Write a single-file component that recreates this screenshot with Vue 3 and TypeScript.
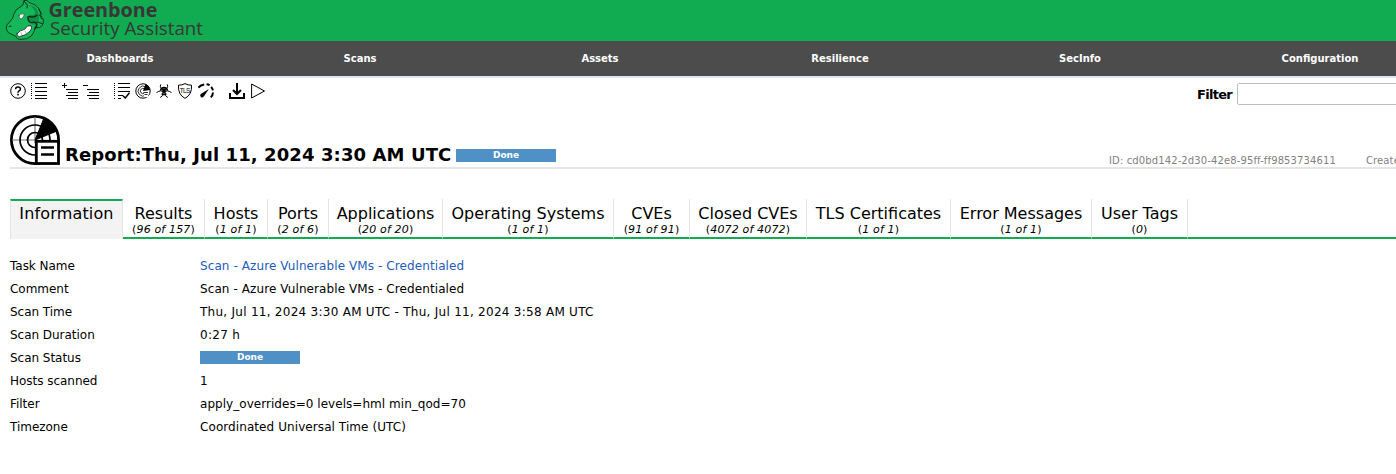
<script setup lang="ts">
interface Tab { title: string; count?: string; width: number }
interface Row { label: string; value: string; kind?: 'link' | 'status'; spacing?: number }

const menu: string[] = ['Dashboards', 'Scans', 'Assets', 'Resilience', 'SecInfo', 'Configuration']

const tabs: Tab[] = [
  { title: 'Information', width: 113 },
  { title: 'Results', count: '96 of 157', width: 82 },
  { title: 'Hosts', count: '1 of 1', width: 63 },
  { title: 'Ports', count: '2 of 6', width: 61 },
  { title: 'Applications', count: '20 of 20', width: 114 },
  { title: 'Operating Systems', count: '1 of 1', width: 171 },
  { title: 'CVEs', count: '91 of 91', width: 76 },
  { title: 'Closed CVEs', count: '4072 of 4072', width: 117 },
  { title: 'TLS Certificates', count: '1 of 1', width: 144 },
  { title: 'Error Messages', count: '1 of 1', width: 141 },
  { title: 'User Tags', count: '0', width: 96 },
]

const rows: Row[] = [
  { label: 'Task Name', value: 'Scan - Azure Vulnerable VMs - Credentialed', kind: 'link', spacing: 0.09 },
  { label: 'Comment', value: 'Scan - Azure Vulnerable VMs - Credentialed', spacing: 0.09 },
  { label: 'Scan Time', value: 'Thu, Jul 11, 2024 3:30 AM UTC - Thu, Jul 11, 2024 3:58 AM UTC', spacing: 0.27 },
  { label: 'Scan Duration', value: '0:27 h', spacing: 0.3 },
  { label: 'Scan Status', value: 'Done', kind: 'status' },
  { label: 'Hosts scanned', value: '1' },
  { label: 'Filter', value: 'apply_overrides=0 levels=hml min_qod=70', spacing: 0.04 },
  { label: 'Timezone', value: 'Coordinated Universal Time (UTC)', spacing: 0.08 },
]
</script>

<template>
  <div class="page">
    <header class="brand">
      <svg class="logo" width="210" height="41" viewBox="0 0 210 41">
        <g transform="scale(.33333)" stroke="#10271a" stroke-linejoin="round" stroke-linecap="round">
          <path d="M72 3 L69 15 L49 29 Q41 40 38 55 L20 76 Q16 88 25 98 L48 109 Q50 119 65 118 Q82 119 94 108 Q103 98 106 79 Q113 88 125 78 Q132 72 130 57 L123 55 Q124 42 118 27 Q108 12 86 7 L82 2 Z" fill="#16b65a" stroke-width="2.5" />
          <path d="M80 4 L83 15 Q108 13 115 38 Q121 55 111 75 L96 73 L83 60 Q81 49 91 45 Q111 47 103 31 Q96 18 82 16Z" fill="#0b9144" stroke="none" />
          <path d="M72 3 L82 16 L81 24 M116 27 L124 41 M118 45 L126 51 M113 66 L127 71" fill="none" stroke-width="3" />
          <path d="M84 50 Q83 66 94 68 Q102 64 109 69 Q113 78 106 86 M88 49 Q98 54 111 46" fill="none" stroke-width="4" />
          <path d="M57 47 Q60 40 73 42 Q71 54 63 57 Q57 55 57 47Z" fill="#fff" stroke-width="1.5" />
          <path d="M51 101 Q60 90 74 88 L82 78 L93 77 Q98 84 90 94 Q77 107 58 110 Q49 109 51 101Z" fill="#fff" stroke-width="2.5" />
          <path d="M63 98 L66 105 M75 93 L79 101" fill="none" stroke-width="1" />
          <path d="M27 80 Q31 73 34 80" fill="none" stroke-width="3" />
        </g>
        <text class="name" x="48.5" y="17" textLength="109" lengthAdjust="spacingAndGlyphs">Greenbone</text>
        <text class="product" x="50" y="35" textLength="153" lengthAdjust="spacingAndGlyphs">Security Assistant</text>
      </svg>
    </header>

    <nav class="menu"><a v-for="item in menu" :key="item">{{ item }}</a></nav>

    <div class="toolbar">
      <div class="icons">
        <div class="group">
          <svg viewBox="0 0 16 16"><circle cx="8" cy="8" r="7.3" class="line" /><path class="line bold" d="M5.6 6.2 Q5.7 4.1 8 4.1 Q10.4 4.1 10.4 6 Q10.4 7.2 9.1 7.9 Q8 8.5 8 9.7" /><rect x="7.2" y="10.8" width="1.6" height="1.6" /></svg>
          <svg viewBox="0 0 16 16"><path class="crisp" d="M4 .5H16M4 4.5H16M4 8.5H16M4 12.5H16M4 15.5H16M0 .5H1M0 4.5H1M0 8.5H1M0 12.5H1M0 15.5H1M0 2.5H1M0 6.5H1M0 10.5H1" /></svg>
        </div>
        <div class="group">
          <svg viewBox="0 0 16 16"><path class="crisp" d="M0 2.5H5M2.5 0V5M4 6.5H16M6 9.5H16M4 12.5H16M6 15.5H16" /></svg>
          <svg viewBox="0 0 16 16"><path class="crisp" d="M0 2.5H5M4 6.5H16M6 9.5H16M4 12.5H16M6 15.5H16" /></svg>
        </div>
        <div class="group">
          <svg viewBox="0 0 16 16"><path class="crisp" d="M4 .5H16M4 4.5H16M4 8.5H16M4 12.5H9M4 15.5H7M0 .5H1M0 4.5H1M0 8.5H1M0 12.5H1M0 15.5H1M0 2.5H1M0 6.5H1M0 10.5H1" /><path class="line bold" d="M9 12.7 L11.3 15 L15.5 9.7" /></svg>
          <svg viewBox="0 0 16 16"><circle cx="8" cy="8" r="7.2" class="line" /><path class="line thin" d="M10.7 3.8 A5 5 0 1 0 11 12.2 M9.6 6 A2.6 2.6 0 1 0 9.6 10" /><path d="M8 8 L10.5 1 Q14.7 2.5 15 7Z" /><path d="M9 9.5 H13.5 V14 H9Z" fill="#fff" /><path class="line thin" d="M8.5 9.5 H13 M9.5 11.5 H12.5" /></svg>
          <svg viewBox="0 0 16 16"><path class="line" d="M4.8 1.4 Q3 5.7 8 6.2 Q13 5.7 11.2 1.4 M.5 9.6 Q5.5 6.3 7 9.2 Q8 12.8 4.2 14.5 M15.5 9.6 Q10.5 6.3 9 9.2 Q8 12.8 11.8 14.5" /><path class="line bold" d="M4.5 7.7 Q5 4.6 8 4.6 Q11 4.6 11.5 7.7 M5.6 10.7 Q8 12.3 10.4 10.7" /><path d="M6 5.8 H10 L9.6 9.3 L8 10.3 L6.4 9.3Z" /></svg>
          <svg viewBox="0 0 16 16"><path class="line" d="M8 .6 Q11 2.3 14.5 2.2 Q15.3 11.5 8 15.4 Q.7 11.5 1.5 2.2 Q5 2.3 8 .6Z" /><text class="tls" x="2.8" y="9.6" textLength="10.4">TLS</text></svg>
          <svg viewBox="0 0 16 16"><path class="heavy" d="M.4 4.6 Q2.5 2 6.2 1.4 M8.5 1.2 Q10.3 1.3 11.6 2.2 M13.2 3.8 Q14.6 5.4 14.9 7.4 M15 9.5 Q14.8 12.4 12.8 14.4" /><path d="M10.8 6 L6.2 13.1 Q4.8 15.2 3 14.2 Q1.3 12.6 2.8 11Z" /></svg>
        </div>
        <div class="group">
          <svg viewBox="0 0 16 16"><path class="heavy" d="M8 0V11M4 7 L8 11 L12 7M1 10V15H15V10" /></svg>
          <svg viewBox="0 0 16 16"><path class="line" d="M1.6 1 L14.5 8 L1.6 15Z" /></svg>
        </div>
      </div>
      <label class="search"><span>Filter</span><input type="text" aria-label="Filter"></label>
    </div>

    <section class="heading">
      <svg class="report" width="50" height="50" viewBox="0 0 50 50">
        <circle cx="25" cy="25" r="23.6" fill="#fff" stroke="#000" stroke-width="2.8" />
        <path d="M2 25H27 M25 2V28" fill="none" stroke="#777" stroke-width="1.2" />
        <circle cx="25" cy="25" r="15" fill="none" stroke="#000" stroke-width="1.7" />
        <circle cx="25" cy="25" r="7.5" fill="none" stroke="#000" stroke-width="1.7" />
        <path d="M25 25 L34 3 Q42 6 47 16Z" stroke="#000" />
        <rect x="26.3" y="26.3" width="22.2" height="22.2" fill="#fff" stroke="#000" stroke-width="2.8" />
        <path d="M31 32.5H44 M31 39.5H44" stroke="#000" stroke-width="2.3" />
      </svg>
      <h1>Report:Thu, Jul 11, 2024 3:30 AM UTC</h1>
      <span class="status">Done</span>
      <div class="meta"><span>ID: cd0bd142-2d30-42e8-95ff-ff9853734611</span><span>Created: Thu, Jul 11, 2024 3:30 AM UTC</span></div>
    </section>

    <div class="tabs">
      <div v-for="(tab, i) in tabs" :key="tab.title" class="tab" :class="{ active: i === 0 }" :style="{ width: tab.width + 'px' }">
        <span class="title">{{ tab.title }}</span>
        <span v-if="tab.count" class="count">(<i>{{ tab.count }}</i>)</span>
      </div>
      <div class="rest"></div>
    </div>

    <dl class="details">
      <template v-for="row in rows" :key="row.label">
        <dt>{{ row.label }}</dt>
        <dd><span :class="row.kind" :style="{ letterSpacing: (row.spacing ?? 0) + 'px' }">{{ row.value }}</span></dd>
      </template>
    </dl>
  </div>
</template>

<style>
body { margin: 0; background: #fff; }
</style>

<style scoped>
* { box-sizing: border-box; }
.page { height: 474px; overflow: hidden; font-family: Verdana, "DejaVu Sans", sans-serif; font-size: 12px; color: #000; }
.brand { height: 41px; background: #11ab51; }
.logo { display: block; }
.name, .product { font-family: "Open Sans", sans-serif; fill: #393637; }
.name { font-size: 20px; font-weight: 700; }
.product { font-size: 18px; }
.menu { display: flex; height: 37px; background: #4c4c4c; border-bottom: 2px solid #d9e6fc; }
.menu a { flex: 0 0 240px; color: #fff; font-size: 10px; font-weight: 700; line-height: 35px; text-align: center; }
.toolbar { display: flex; justify-content: space-between; height: 37px; padding: 5px 0 0 10px; }
.icons { display: flex; gap: 15px; }
.group { display: flex; gap: 5px; }
.group svg { width: 16px; height: 16px; }
.line { fill: none; stroke: #000; stroke-width: 1; }
.thin { stroke-width: .8; }
.bold { stroke-width: 1.5; }
.heavy { fill: none; stroke: #000; stroke-width: 2; }
.crisp { fill: none; stroke: #000; stroke-width: 1; shape-rendering: crispEdges; }
.tls { font-family: "Liberation Sans", sans-serif; font-size: 6.4px; }
.search { display: flex; width: 199px; height: 22px; gap: 5px; font-size: 13px; font-weight: 700; line-height: 23px; letter-spacing: -.7px; }
.search span { width: 35px; white-space: nowrap; }
.search input { flex: 0 0 200px; height: 22px; border: 1px solid #bfbfbf; border-radius: 2px; background: #fff; outline: 0; }
.heading { display: flex; height: 54px; margin-left: 10px; border-bottom: 2px solid #e5e5e5; white-space: nowrap; }
.report { flex: none; }
h1 { width: 386px; margin: 28px 5px 0; font-size: 18px; line-height: 24px; letter-spacing: .1px; }
.status { display: block; width: 100px; height: 13px; background: #4f91c7; color: #fff; font-size: 9px; font-weight: 700; line-height: 13px; text-align: center; }
.heading .status { flex: none; margin-top: 34px; }
.meta { display: flex; flex: none; gap: 30px; width: 287px; margin: 39px 0 0 auto; overflow: hidden; color: #7f7f7f; font-size: 10px; line-height: 14px; letter-spacing: .12px; }
.meta span { flex: none; }
.tabs { display: flex; height: 40px; margin: 30px 0 0 10px; }
.tab { display: flex; flex: none; flex-direction: column; align-items: center; padding-top: 5px; border-right: 1px solid #e5e5e5; border-bottom: 2px solid #11ab51; white-space: nowrap; }
.active { padding-top: 3px; border-top: 2px solid #11ab51; border-bottom: 0; border-left: 1px solid #e5e5e5; background: #f3f3f3; }
.active .title { letter-spacing: .15px; }
.title { font-size: 16px; line-height: 20px; }
.count { font-size: 11px; line-height: 12px; letter-spacing: .15px; }
.rest { flex: 1; border-bottom: 2px solid #11ab51; }
.details { display: grid; grid-template-columns: 190px 1fr; grid-auto-rows: 23px; align-items: center; margin: 15px 0 0 10px; }
dt, dd { margin: 0; white-space: nowrap; }
dt { letter-spacing: -.03px; }
.link { color: #1e5cb8; }
</style>
